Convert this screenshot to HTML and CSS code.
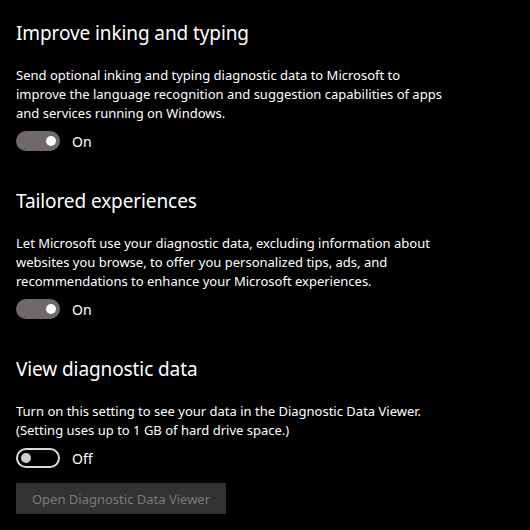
FILE: index.html
```html
<!DOCTYPE html>
<html>
<head>
<meta charset="utf-8">
<link rel="stylesheet" href="styles.css">
</head>
<body>
<main class="page">
  <section class="group">
    <h2 class="title">Improve inking and typing</h2>
    <p class="desc">Send optional inking and typing diagnostic data to Microsoft to improve the language recognition and suggestion capabilities of apps and services running on Windows.</p>
    <div class="toggle-row">
      <span class="switch on"><span class="knob"></span></span>
      <span class="state">On</span>
    </div>
  </section>
  <section class="group">
    <h2 class="title">Tailored experiences</h2>
    <p class="desc">Let Microsoft use your diagnostic data, excluding information about websites you browse, to offer you personalized tips, ads, and recommendations to enhance your Microsoft experiences.</p>
    <div class="toggle-row">
      <span class="switch on"><span class="knob"></span></span>
      <span class="state">On</span>
    </div>
  </section>
  <section class="group">
    <h2 class="title">View diagnostic data</h2>
    <p class="desc">Turn on this setting to see your data in the Diagnostic Data Viewer. (Setting uses up to 1 GB of hard drive space.)</p>
    <div class="toggle-row">
      <span class="switch off"><span class="knob"></span></span>
      <span class="state">Off</span>
    </div>
    <button class="btn" disabled>Open Diagnostic Data Viewer</button>
  </section>
</main>
</body>
</html>
```
FILE: styles.css
```css
html, body {
  margin: 0;
  padding: 0;
  background: #000;
}
body {
  font-family: "Noto Sans", "Open Sans", sans-serif;
  color: #fff;
  width: 530px;
  height: 530px;
  overflow: hidden;
}
.page {
  padding: 19px 16px 0 16px;
  display: flex;
  flex-direction: column;
  gap: 36px;
}
.group {
  display: flex;
  flex-direction: column;
}
.title {
  margin: 0;
  font-weight: 400;
  font-size: 19px;
  line-height: 28px;
  letter-spacing: -0.1px;
}
.desc {
  margin: 19px 0 0 0;
  font-size: 13px;
  line-height: 19px;
  max-width: 434px;
}
.toggle-row {
  margin-top: 8px;
  display: flex;
  align-items: center;
  gap: 12px;
  height: 20px;
}
.switch {
  box-sizing: border-box;
  width: 44px;
  height: 20px;
  border-radius: 10px;
  display: flex;
  align-items: center;
  padding: 0 4px;
}
.switch.on {
  background: #6f6a69;
  justify-content: flex-end;
}
.switch.off {
  border: 2px solid #dcdcdc;
  padding: 0 3px;
  justify-content: flex-start;
}
.knob {
  width: 10px;
  height: 10px;
  border-radius: 50%;
}
.on .knob { background: #fff; }
.off .knob { background: #cfcfcf; }
.state {
  font-size: 14px;
}
.btn {
  align-self: flex-start;
  margin-top: 15px;
  width: 210px;
  height: 31px;
  border: none;
  background: #333;
  color: #7a7a7a;
  font-family: "Noto Sans", "Open Sans", sans-serif;
  font-size: 13px;
  padding: 0;
}
```
